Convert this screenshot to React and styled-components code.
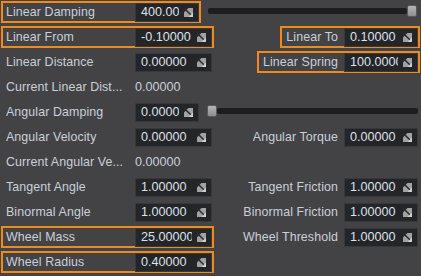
import React from "react";
import styled, { createGlobalStyle } from "styled-components";

const Global = createGlobalStyle`
  html, body { margin: 0; padding: 0; background: #434346; }
  body { font-family: "Liberation Sans", Arial, sans-serif; }
`;

const ORANGE = "#f08a1a";

const Panel = styled.div`
  width: 421px;
  height: 276px;
  background: #434346;
  overflow: hidden;
  display: flex;
  flex-direction: column;
`;

const Row = styled.div`
  height: 25px;
  flex: none;
  display: flex;
  align-items: flex-start;
`;

const Cell = styled.div`
  box-sizing: border-box;
  height: 22px;
  margin-top: 1px;
  display: flex;
  align-items: center;
  border: 2px solid ${(p) => (p.$hl ? ORANGE : "transparent")};
`;

const LeftCell = styled(Cell)`
  flex: none;
  margin-left: 1px;
  width: ${(p) => (p.$short ? 200 : 213)}px;
  padding-left: 3px;
`;

const RightWrap = styled.div`
  flex: 1;
  display: flex;
  justify-content: flex-end;
  padding-right: 1px;
`;

const RightCell = styled(Cell)`
  padding-left: 4px;
  gap: 6px;
`;

const Label = styled.span`
  flex: ${(p) => (p.$grow ? 1 : "none")};
  font-size: 12.4px;
  letter-spacing: 0.1px;
  color: #c9d0d8;
  white-space: nowrap;
  overflow: hidden;
`;

const PlainValue = styled.span`
  width: 77px;
  font-size: 12.6px;
  color: #c9d0d8;
  white-space: nowrap;
`;

const Input = styled.div`
  box-sizing: border-box;
  width: ${(p) => p.$w}px;
  height: 19px;
  flex: none;
  display: flex;
  align-items: center;
  background: #242528;
  border: 1px solid #37383b;
  padding-left: 5px;
  padding-right: 5px;
  gap: 5px;
`;

const Value = styled.span`
  flex: 1;
  overflow: hidden;
  white-space: nowrap;
  font-size: 12.6px;
  color: #dde2e7;
`;

const SliderBox = styled.div`
  flex: 1;
  height: 21px;
  margin-left: ${(p) => (p.$start ? 6 : 7)}px;
  margin-right: ${(p) => (p.$start ? 3 : 4)}px;
  display: flex;
  align-items: center;
  flex-direction: ${(p) => (p.$start ? "row" : "row-reverse")};
`;

const Track = styled.div`
  flex: 1;
  height: 6px;
  background: #1d1d1f;
  border-radius: 2px;
`;

const Thumb = styled.div`
  width: 10px;
  height: 12px;
  flex: none;
  border-radius: 2px;
  background: linear-gradient(#b4b4b4, #8e8e8e);
  border: 1px solid #5a5a5a;
  box-sizing: border-box;
`;

const ResizeIcon = () => (
  <svg width="9" height="9" viewBox="0 0 9 9" style={{ flex: "none" }}>
    <rect x="0" y="0" width="9" height="9" fill="#a2a2a2" />
    <path d="M0 0 L4.5 0 L0 4.5 Z" fill="#2a2a2c" />
    <path d="M1.2 1.2 L7.8 7.8" stroke="#2a2a2c" strokeWidth="1.5" />
    <path d="M9 9 L4.5 9 L9 4.5 Z" fill="#d0d0d0" />
  </svg>
);

const Field = ({ value, w }) => (
  <Input $w={w}>
    <Value>{value}</Value>
    <ResizeIcon />
  </Input>
);

const Left = ({ label, value, hl, plain, short }) => (
  <LeftCell $hl={hl} $short={short}>
    <Label $grow>{label}</Label>
    {plain ? (
      <PlainValue>{value}</PlainValue>
    ) : (
      <Field value={value} w={short ? 64 : 77} />
    )}
  </LeftCell>
);

const Right = ({ label, value, hl }) => (
  <RightWrap>
    <RightCell $hl={hl}>
      <Label>{label}</Label>
      <Field value={value} w={74} />
    </RightCell>
  </RightWrap>
);

const Slider = ({ start }) => (
  <SliderBox $start={start}>
    <Thumb />
    <Track />
  </SliderBox>
);

export default function App() {
  return (
    <>
      <Global />
      <Panel>
        <Row>
          <Left label="Linear Damping" value="400.00" hl short />
          <Slider />
        </Row>
        <Row>
          <Left label="Linear From" value="-0.10000" hl />
          <Right label="Linear To" value="0.10000" hl />
        </Row>
        <Row>
          <Left label="Linear Distance" value="0.00000" />
          <Right label="Linear Spring" value="100.00000" hl />
        </Row>
        <Row>
          <Left label="Current Linear Dist..." value="0.00000" plain />
        </Row>
        <Row>
          <Left label="Angular Damping" value="0.0000" short />
          <Slider start />
        </Row>
        <Row>
          <Left label="Angular Velocity" value="0.00000" />
          <Right label="Angular Torque" value="0.00000" />
        </Row>
        <Row>
          <Left label="Current Angular Ve..." value="0.00000" plain />
        </Row>
        <Row>
          <Left label="Tangent Angle" value="1.00000" />
          <Right label="Tangent Friction" value="1.00000" />
        </Row>
        <Row>
          <Left label="Binormal Angle" value="1.00000" />
          <Right label="Binormal Friction" value="1.00000" />
        </Row>
        <Row>
          <Left label="Wheel Mass" value="25.00000" hl />
          <Right label="Wheel Threshold" value="1.00000" />
        </Row>
        <Row>
          <Left label="Wheel Radius" value="0.40000" hl />
        </Row>
      </Panel>
    </>
  );
}
